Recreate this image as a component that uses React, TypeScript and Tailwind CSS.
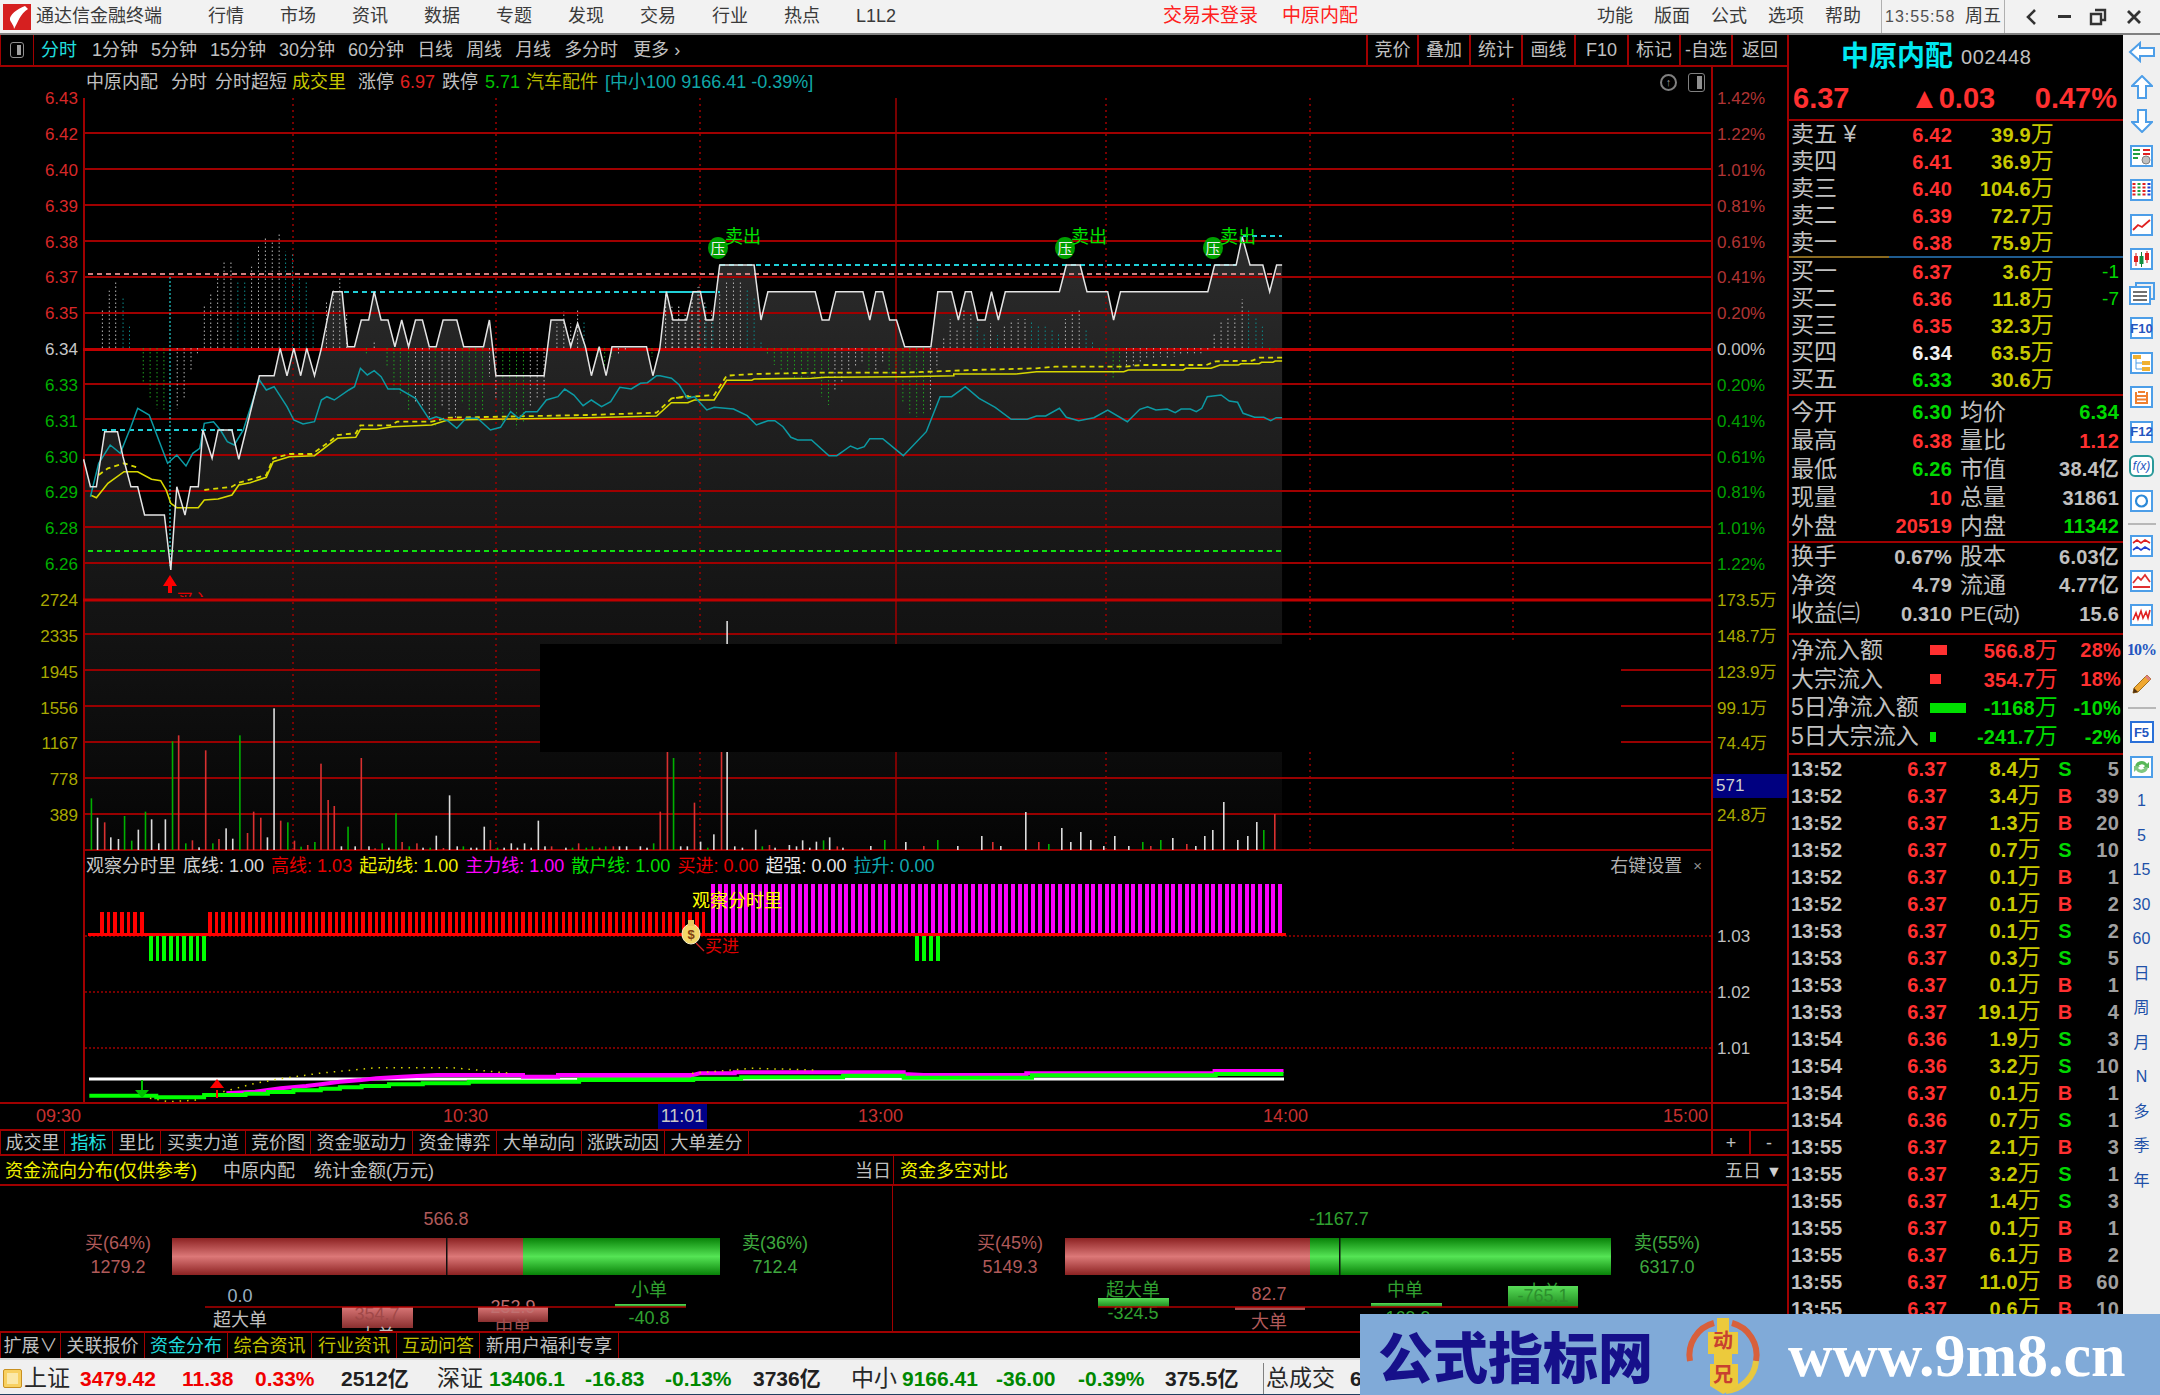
import React from "react";

type Pt = [number, number];
const z3 = (pts: Pt[]): Pt[] => pts.map(([x, y]) => [x / 2.178, 200 + y / 3]);
const z4 = (pts: Pt[]): Pt[] => pts.map(([x, y]) => [660 + x / 2.178, 200 + y / 3]);
const str = (pts: Pt[]) => pts.map(([x, y]) => `${x.toFixed(1)},${y.toFixed(1)}`).join(" ");

const price: Pt[] = [
  ...z3([[182,778],[197,860],[210,860],[228,695],[256,695],[268,770],[285,860],[300,860],[315,945],[358,945],[372,1110],[385,860],[403,945],[415,860],[432,860],[442,690],[462,775],[475,690],[505,690],[520,778],[565,527],[597,527],[610,445],[625,527],[640,445],[655,527],[668,445],[685,527],[700,445],[725,275],[745,275],[757,440],[772,440],[787,360],[803,360],[815,275],[830,360],[845,360],[860,440],[875,360],[890,440],[905,360],[920,360],[935,440],[950,440],[965,360],[995,360],[1010,440],[1053,440],[1066,360],[1080,527],[1185,527],[1200,360],[1228,360],[1243,440],[1258,370],[1275,440],[1288,527],[1305,440],[1320,527],[1333,440],[1408,440],[1422,527],[1437,445]]),
  ...z4([[14,275],[28,360],[58,360],[72,275],[88,275],[100,360],[115,360],[130,195],[205,195],[220,360],[235,275],[338,275],[353,360],[368,360],[383,275],[442,275],[457,360],[470,275],[485,275],[500,360],[515,360],[533,440],[590,440],[605,275],[635,275],[650,360],[665,275],[678,275],[692,360],[708,360],[722,275],[737,360],[752,275],[870,275],[885,195],[915,195],[930,275],[975,275],[988,360],[1003,275],[1193,275],[1208,195],[1255,195],[1268,110],[1285,195],[1313,195],[1328,275],[1343,195],[1355,195]]),
];

const teal: Pt[] = [
  ...z3([[197,890],[215,790],[240,735],[262,760],[285,680],[300,625],[325,645],[365,790],[385,765],[405,798],[420,760],[435,745],[445,670],[465,665],[480,690],[495,725],[510,735],[530,690],[565,540],[580,570],[597,560],[625,620],[640,660],[660,672],[685,665],[700,600],[712,590],[728,600],[760,570],[772,560],[785,505],[800,525],[815,512],[830,530],[845,567],[870,567],[905,595],[935,658],[950,650],[975,662],[995,685],[1015,655],[1040,655],[1068,690],[1090,682],[1112,635],[1130,655],[1145,635],[1170,635],[1190,600],[1215,590],[1230,567],[1250,585],[1270,617],[1288,600],[1310,620],[1330,605],[1350,562],[1375,567],[1395,550],[1410,548],[1430,527]]),
  ...z4([[0,527],[25,535],[42,555],[60,595],[75,590],[102,630],[118,622],[160,627],[190,647],[210,675],[235,662],[250,662],[268,680],[285,712],[300,720],[330,720],[368,767],[385,767],[415,738],[430,747],[445,740],[457,716],[485,716],[530,767],[580,695],[590,660],[610,590],[635,590],[665,560],[695,595],[730,622],[765,658],[800,658],[820,648],[840,648],[870,625],[885,652],[912,662],[945,653],[975,630],[1018,665],[1045,628],[1062,620],[1080,630],[1105,627],[1122,638],[1135,627],[1155,627],[1168,635],[1180,625],[1192,590],[1222,585],[1240,603],[1258,607],[1270,640],[1295,652],[1315,652],[1330,662],[1342,653],[1355,653]]),
];

const yellow: Pt[] = [
  ...z3([[197,885],[210,893],[235,850],[270,815],[300,815],[330,838],[350,842],[362,870],[372,910],[385,923],[432,923],[445,900],[475,897],[505,885],[520,855],[545,848],[580,832],[595,785],[630,770],[685,767],[720,730],[735,715],[775,712],[785,688],[820,688],[855,680],[940,675],[975,660],[1280,653],[1430,648],[1462,608],[1500,608]]),
  ...z4([[25,608],[60,608],[75,600],[118,600],[145,541],[200,541],[205,537],[330,535],[360,532],[530,530],[640,527],[640,522],[775,522],[820,515],[1010,515],[1020,510],[1140,510],[1145,505],[1200,505],[1220,495],[1260,495],[1265,491],[1305,491],[1310,487],[1335,487],[1340,483],[1355,483]]),
];

const yellowDash: Pt[] = [
  ...z3([[215,825],[235,805],[270,790],[300,803]]),
];
const yellowDash2: Pt[] = [
  ...z3([[445,870],[505,860],[520,848],[580,825],[595,775],[630,762],[680,762],[720,722],[735,705],[775,700],[785,676],[850,676],[865,665],[940,665],[975,653],[1280,645],[1430,638],[1462,596],[1500,588]]),
  ...z4([[25,595],[118,585],[145,527],[205,522],[340,518],[530,518],[680,510],[820,505],[860,500],[1010,500],[1050,495],[1190,495],[1210,484],[1290,482],[1305,473],[1355,473]]),
];

type Stick = [number, number, string];
const tickColor: Record<string, string> = { w: "#b4b4b4", t: "#0b8a8a", g: "#1fa01f" };
const sticks3: Stick[] = [[223,330,"w"],[238,272,"w"],[252,245,"w"],[268,290,"t"],[282,380,"t"],[312,545,"g"],[327,600,"g"],[342,625,"g"],[357,632,"g"],[386,625,"w"],[401,595,"w"],[416,515,"w"],[430,460,"w"],[445,312,"w"],[459,280,"w"],[474,225,"w"],[488,185,"w"],[503,182,"w"],[518,245,"t"],[533,245,"t"],[548,200,"w"],[563,140,"w"],[578,115,"w"],[593,120,"w"],[608,97,"w"],[622,155,"t"],[637,160,"t"],[652,235,"t"],[667,245,"t"],[682,325,"t"],[711,305,"w"],[726,270,"w"],[740,228,"w"],[755,340,"w"],[798,460,"g"],[815,420,"w"],[843,500,"g"],[858,570,"g"],[872,585,"g"],[890,635,"g"],[905,610,"w"],[920,635,"w"],[935,660,"w"],[948,680,"g"],[963,620,"w"],[978,640,"w"],[992,660,"w"],[1007,610,"g"],[1022,630,"g"],[1036,640,"g"],[1051,635,"g"],[1066,530,"w"],[1080,600,"w"],[1095,670,"g"],[1110,650,"g"],[1125,685,"g"],[1140,670,"g"],[1155,620,"w"],[1170,600,"w"],[1185,600,"w"],[1213,370,"w"],[1228,335,"w"],[1243,370,"w"],[1258,330,"w"],[1272,365,"t"],[1302,470,"g"],[1317,500,"g"],[1332,470,"g"],[1347,465,"w"],[1362,450,"w"],[1420,470,"g"],[1450,280,"w"],[1465,340,"w"],[1478,320,"w"],[1492,340,"w"],[1507,300,"w"],[1520,262,"w"],[1535,300,"w"],[1550,330,"w"]];
const sticks4: Stick[] = [[12,320,"w"],[26,320,"w"],[41,320,"w"],[56,345,"w"],[70,280,"w"],[85,260,"w"],[100,320,"t"],[115,360,"t"],[130,282,"w"],[145,245,"w"],[160,238,"w"],[175,245,"w"],[190,268,"t"],[205,290,"t"],[220,425,"t"],[234,465,"g"],[249,495,"g"],[264,510,"g"],[278,525,"g"],[293,540,"g"],[308,535,"g"],[322,530,"g"],[337,530,"g"],[352,590,"g"],[367,615,"g"],[381,575,"w"],[396,545,"w"],[411,520,"w"],[426,503,"w"],[440,490,"w"],[455,535,"g"],[470,510,"w"],[485,490,"w"],[499,525,"g"],[514,550,"g"],[529,610,"g"],[544,640,"g"],[559,650,"g"],[574,640,"g"],[589,630,"w"],[603,505,"w"],[618,410,"w"],[632,358,"w"],[647,385,"w"],[662,330,"w"],[677,340,"w"],[691,370,"t"],[706,400,"t"],[720,370,"w"],[735,405,"t"],[750,380,"w"],[765,362,"w"],[780,357,"w"],[795,357,"w"],[809,365,"t"],[824,373,"t"],[839,380,"t"],[854,390,"t"],[868,400,"t"],[883,357,"w"],[898,335,"w"],[913,325,"w"],[928,385,"t"],[942,425,"t"],[957,455,"g"],[972,475,"g"],[987,540,"g"],[1001,510,"g"],[1016,500,"w"],[1031,500,"w"],[1046,490,"w"],[1060,480,"w"],[1075,478,"w"],[1090,470,"w"],[1105,475,"w"],[1120,470,"w"],[1134,465,"w"],[1149,460,"w"],[1164,460,"w"],[1178,460,"w"],[1193,455,"w"],[1207,398,"w"],[1222,365,"w"],[1237,352,"w"],[1252,347,"w"],[1268,298,"w"],[1282,332,"t"],[1298,352,"t"],[1312,380,"t"],[1328,455,"g"],[1342,445,"g"],[1357,445,"g"]];

const volColor: Record<string, string> = { r: "#d83030", w: "#dcdcdc", g: "#00b000" };
const vols12: Stick[] = [[60,595,"g"],[72,653,"w"],[86,667,"r"],[98,712,"w"],[113,717,"w"],[125,648,"g"],[139,722,"g"],[152,689,"w"],[166,635,"g"],[178,658,"w"],[192,730,"w"],[205,658,"w"],[219,424,"g"],[231,406,"r"],[245,730,"g"],[258,721,"r"],[271,742,"w"],[284,451,"r"],[298,730,"g"],[310,717,"r"],[324,685,"w"],[337,716,"w"],[351,406,"g"],[366,699,"r"],[378,635,"r"],[392,653,"r"],[405,712,"w"],[418,325,"w"],[431,662,"r"],[445,667,"g"],[458,722,"r"],[471,740,"g"],[484,735,"r"],[498,726,"g"],[510,491,"r"],[524,600,"r"],[536,618,"r"],[550,739,"w"],[563,680,"g"],[577,739,"w"],[589,474,"r"],[604,739,"w"],[616,745,"r"],[630,730,"g"],[643,743,"w"],[657,640,"g"],[669,726,"r"],[683,739,"g"],[698,730,"r"],[710,743,"w"],[724,743,"g"],[736,707,"w"],[750,744,"r"],[762,586,"w"],[777,739,"w"],[789,739,"g"],[804,743,"w"],[815,743,"w"],[830,680,"w"],[842,720,"r"],[856,743,"g"],[869,743,"w"],[883,730,"w"],[895,743,"w"],[909,730,"w"],[922,743,"w"],[936,662,"w"],[949,739,"w"],[962,739,"r"],[990,743,"w"],[1003,743,"g"],[1015,730,"r"],[1030,743,"g"],[1042,739,"g"],[1056,743,"r"],[1068,739,"g"],[1083,739,"r"],[1095,739,"w"],[1109,739,"w"],[1136,739,"w"],[1149,743,"w"],[1162,730,"g"],[1175,635,"r"],[1189,455,"r"],[1201,474,"g"],[1215,739,"w"],[1228,739,"w"],[1242,608,"r"],[1254,725,"w"],[1268,743,"g"],[1280,703,"w"],[1295,455,"r"],[1306,63,"w"],[1321,739,"w"],[1336,743,"w"],[1362,689,"w"],[1375,739,"g"],[1389,735,"r"],[1400,743,"w"],[1428,735,"w"],[1442,739,"w"],[1454,721,"w"],[1468,743,"w"],[1481,725,"w"],[1495,721,"g"],[1507,712,"w"],[1522,739,"r"],[1533,743,"w"]];
const volsRest: Stick[] = [[870,4,"w"],[884,10,"g"],[905,8,"w"],[923,4,"r"],[937,10,"g"],[957,4,"w"],[981,14,"w"],[992,8,"r"],[1000,4,"w"],[1025,38,"w"],[1038,8,"r"],[1048,6,"g"],[1061,22,"w"],[1070,8,"w"],[1080,18,"w"],[1090,10,"w"],[1103,4,"w"],[1114,14,"w"],[1128,4,"w"],[1142,8,"g"],[1150,4,"r"],[1160,10,"g"],[1172,12,"w"],[1186,6,"r"],[1195,4,"w"],[1204,14,"w"],[1212,20,"w"],[1223,48,"w"],[1237,10,"w"],[1247,14,"w"],[1256,28,"w"],[1263,20,"g"],[1274,36,"r"]];

const priceLines = [97, 133, 169, 205, 241, 277, 313, 384, 419, 455, 491, 527, 563];
const volLines = [634, 670, 706, 742, 778, 814, 850];

function PriceChart() {
  const fill = `${str(price)} 1282,850 83,850`;
  return (
    <svg viewBox="83 98 1628 753" width={1628} height={753} className="block">
      <defs>
        <linearGradient id="areaFill" x1="0" y1="0" x2="0" y2="1">
          <stop offset="0" stopColor="#2c2c2c" />
          <stop offset="0.4" stopColor="#1b1b1b" />
          <stop offset="0.7" stopColor="#111111" />
          <stop offset="1" stopColor="#050505" />
        </linearGradient>
        <clipPath id="buyClip"><rect x="170" y="588" width="60" height="9" /></clipPath>
      </defs>
      <polygon points={fill} fill="url(#areaFill)" />
      {priceLines.map((y) => <line key={y} x1="83" x2="1711" y1={y} y2={y} stroke="#a00000" strokeWidth="2" />)}
      {volLines.map((y) => <line key={y} x1="83" x2="1711" y1={y} y2={y} stroke="#980000" strokeWidth="2" />)}
      {[293, 496, 700, 1106, 1310, 1513].map((x) => <line key={x} x1={x} x2={x} y1="98" y2="850" stroke="#a00000" strokeWidth="1.5" strokeDasharray="2 4" />)}
      <line x1="896" x2="896" y1="98" y2="850" stroke="#a00000" strokeWidth="1.5" />
      <line x1="84" x2="84" y1="98" y2="851" stroke="#a00000" strokeWidth="2" />
      <line x1="83" x2="1711" y1="349.5" y2="349.5" stroke="#c00000" strokeWidth="3" />
      <line x1="83" x2="1711" y1="600" y2="600" stroke="#c00000" strokeWidth="3" />

      {[...z3(sticks3.map(([x, y]) => [x, y] as Pt)).map((p, i) => [p[0], p[1], sticks3[i][2]] as Stick), ...z4(sticks4.map(([x, y]) => [x, y] as Pt)).map((p, i) => [p[0], p[1], sticks4[i][2]] as Stick)].map(([x, y, c], i) => (
        <line key={i} x1={x} x2={x} y1="348" y2={y} stroke={tickColor[c]} strokeWidth="1" strokeDasharray="1.5 2.5" />
      ))}

      <line x1="170" x2="170" y1="273" y2="566" stroke="#22d0d0" strokeWidth="1.2" strokeDasharray="2 2" />
      <line x1="88" x2="1282" y1="274" y2="274" stroke="#d08080" strokeWidth="2" strokeDasharray="5 4" />
      <line x1="88" x2="1282" y1="551" y2="551" stroke="#10e010" strokeWidth="2" strokeDasharray="5 4" />
      {[[102, 243, 430], [344, 715, 292], [664, 720, 292], [720, 1236, 265], [1243, 1282, 236]].map(([a, b, y], i) => (
        <line key={i} x1={a} x2={b} y1={y} y2={y} stroke="#20d0d8" strokeWidth="2" strokeDasharray="5 4" />
      ))}

      <polyline points={str(yellowDash)} fill="none" stroke="#d8d800" strokeWidth="1.8" strokeDasharray="5 4" />
      <polyline points={str(yellowDash2)} fill="none" stroke="#d8d800" strokeWidth="1.8" strokeDasharray="5 4" />
      <polyline points={str(yellow)} fill="none" stroke="#d8d800" strokeWidth="1.6" />
      <polyline points={str(teal)} fill="none" stroke="#0c9aa4" strokeWidth="1.5" />
      <polyline points={str(price)} fill="none" stroke="#e4e4e4" strokeWidth="1.5" />

      {[[718, 725], [1065, 1071], [1213, 1220]].map(([cx, tx]) => (
        <g key={cx}>
          <ellipse cx={cx} cy="248" rx="10" ry="11" fill="#00a000" />
          <text x={cx} y="254" textAnchor="middle" fontSize="15" fill="#f0f0f0">压</text>
          <text x={tx} y="243" fontSize="18" fill="#00e000">卖出</text>
        </g>
      ))}

      <path d="M170 575 L177 586 L172 586 L172 593 L168 593 L168 586 L163 586 Z" fill="#ff0000" />
      <text x="176" y="606" fontSize="17" fill="#e00000" clipPath="url(#buyClip)">买入</text>

      {[...vols12.map(([x, y, c]) => [60 + x / 1.96, 600 + y / 3, c] as Stick), ...volsRest.map(([x, h, c]) => [x, 850 - h, c] as Stick)].map(([x, y, c], i) => (
        <rect key={i} x={x} y={y} width="1.6" height={850 - y} fill={volColor[c]} />
      ))}

      <rect x="540" y="644" width="1081" height="108" fill="#000000" />
    </svg>
  );
}

function IndicatorChart() {
  const green: Pt[] = [[140,767],[245,767],[245,772],[320,772],[320,765],[385,765],[385,761],[420,761],[420,756],[460,756],[460,751],[503,751],[503,746],[533,746],[533,742],[567,742],[567,738],[610,738],[610,733],[663,733],[663,730],[735,730],[735,725],[908,725],[908,720],[1087,720],[1087,716],[1162,716],[1162,712],[1322,712],[1322,707],[1417,707],[1417,713],[1568,713]];
  const magenta: Pt[] = [[355,760],[400,755],[440,745],[480,738],[503,733],[533,725],[567,720],[590,715],[630,710],[685,705],[820,705],[820,710],[875,710],[875,705],[1087,705],[1097,700],[1152,700],[1152,697],[1417,697],[1417,702],[1448,705],[1568,705]];
  const conv = (p: Pt[]) => p.map(([x, y]) => [x / 1.568, 840 + y / 3] as Pt);
  const conv8 = (p: Pt[]) => p.map(([x, y]) => [900 + x / 1.742, 840 + y / 3] as Pt);
  const stepGreen = [...conv(green), ...conv8([[230,713],[230,706],[550,706],[550,702],[668,702]])];
  const stepMag = [...conv(magenta), ...conv8([[0,705],[220,705],[220,700],[548,700],[548,693],[668,693]])];
  const count = (a: number, b: number) => Array.from({ length: Math.floor((b - a) / 6.67) + 1 }, (_, i) => a + i * 6.67);
  return (
    <svg viewBox="85 881 1626 221" width={1626} height={221} className="block">
      {[936, 992, 1048].map((y) => <line key={y} x1="85" x2="1711" y1={y} y2={y} stroke="#a00000" strokeWidth="1.5" strokeDasharray="2 2" />)}
      {[...count(100, 142), ...count(208, 706)].map((x) => <rect key={x} x={x} y="912" width="3.6" height="23" fill="#ff0000" shapeRendering="crispEdges" />)}
      {count(711, 1283).map((x) => <rect key={x} x={x} y="884" width="4" height="51" fill="#ff00ff" shapeRendering="crispEdges" />)}
      {[...count(149, 204), 915, 922, 929, 936].filter((x) => x < 205 || x > 900).map((x) => <rect key={x} x={x} y="935" width="3.8" height="26" fill="#00ff00" shapeRendering="crispEdges" />)}
      <line x1="88" x2="1286" y1="934.5" y2="934.5" stroke="#ff0000" strokeWidth="3" />
      <line x1="89" x2="1284" y1="1079" y2="1079" stroke="#ffffff" strokeWidth="3" />
      <polyline points={str(stepMag)} fill="none" stroke="#ff00ff" strokeWidth="4" />
      <polyline points={str(stepGreen)} fill="none" stroke="#00ff00" strokeWidth="4" />
      <polyline points={str(conv([[350,755],[400,730],[440,716],[500,700],[590,683],[710,683],[800,700]]))} fill="none" stroke="#d8d800" strokeWidth="1.5" strokeDasharray="1.5 6" />
      <polyline points={str(conv([[1085,700],[1180,685],[1280,690]]))} fill="none" stroke="#d8d800" strokeWidth="1.5" strokeDasharray="1.5 6" />
      <polyline points={str(conv([[235,775],[265,785],[310,780]]))} fill="none" stroke="#d8d800" strokeWidth="1.5" strokeDasharray="1.5 6" />
      <line x1="142" x2="142" y1="1080" y2="1092" stroke="#00c000" strokeWidth="2" />
      <path d="M135 1090 L149 1090 L142 1098 Z" fill="#00c000" />
      <line x1="217" x2="217" y1="1090" y2="1098" stroke="#ff0000" strokeWidth="2" />
      <path d="M210 1088 L224 1088 L217 1079 Z" fill="#ff0000" />
      <text x="692" y="907" fontSize="18" fill="#ffff00">观察分时里</text>
      <ellipse cx="691" cy="934" rx="9" ry="10" fill="#f2d76a" stroke="#f8f0c8" />
      <rect x="688" y="920" width="6" height="6" fill="#e8c860" />
      <text x="691" y="939" textAnchor="middle" fontSize="13" fontWeight="700" fill="#804010">$</text>
      <line x1="696" x2="704" y1="943" y2="951" stroke="#d02020" strokeWidth="1.2" />
      <text x="705" y="952" fontSize="17" fill="#e00000">买进</text>
    </svg>
  );
}

function FlowChart(props: {
  box: string; id: string; total: string; totalColor: string; buyLabel: string; buy: string; sellLabel: string; sell: string;
  labelX: [number, number]; bar: [number, number, number, number]; base: [number, number]; children: React.ReactNode;
}) {
  const [a, mid, div, b] = props.bar;
  const cx = div;
  return (
    <svg viewBox={props.box} width={893} height={145} className="block">
      <defs>
        <linearGradient id={props.id + "r"} x1="0" y1="0" x2="0" y2="1">
          <stop offset="0" stopColor="#8c2222" /><stop offset="0.5" stopColor="#dc7878" /><stop offset="1" stopColor="#8c2222" />
        </linearGradient>
        <linearGradient id={props.id + "g"} x1="0" y1="0" x2="0" y2="1">
          <stop offset="0" stopColor="#088208" /><stop offset="0.5" stopColor="#55e455" /><stop offset="1" stopColor="#088208" />
        </linearGradient>
        <linearGradient id={props.id + "fr"} x1="0" y1="0" x2="0" y2="1">
          <stop offset="0" stopColor="#d87676" /><stop offset="1" stopColor="#8a3030" />
        </linearGradient>
        <linearGradient id={props.id + "fg"} x1="0" y1="0" x2="0" y2="1">
          <stop offset="0" stopColor="#58dc58" /><stop offset="1" stopColor="#1c881c" />
        </linearGradient>
      </defs>
      <text x={cx} y="1225" textAnchor="middle" fontSize="18" fill={props.totalColor}>{props.total}</text>
      <text x={props.labelX[0]} y="1249" textAnchor="middle" fontSize="18" fill="#b05a5a">{props.buyLabel}</text>
      <text x={props.labelX[0]} y="1273" textAnchor="middle" fontSize="18" fill="#b05a5a">{props.buy}</text>
      <text x={props.labelX[1]} y="1249" textAnchor="middle" fontSize="18" fill="#3fa83f">{props.sellLabel}</text>
      <text x={props.labelX[1]} y="1273" textAnchor="middle" fontSize="18" fill="#3fa83f">{props.sell}</text>
      <rect x={a} y="1238" width={mid - a} height="37" fill={`url(#${props.id}r)`} />
      <rect x={mid} y="1238" width={b - mid} height="37" fill={`url(#${props.id}g)`} />
      <rect x={div} y="1238" width="1.5" height="37" fill="#101010" />
      {props.children}
      <line x1={props.base[0]} x2={props.base[1]} y1="1307" y2="1307" stroke="#b00000" strokeWidth="1.6" />
    </svg>
  );
}

const t = "text-[#c0c0c0]";

function TitleBar() {
  const menu = ["行情", "市场", "资讯", "数据", "专题", "发现", "交易", "行业", "热点", "L1L2"];
  const menuRight = ["功能", "版面", "公式", "选项", "帮助"];
  return (
    <div className="flex h-[35px] shrink-0 items-center whitespace-nowrap border-b-2 border-[#808080] bg-[#f2f2f2] text-[18px] text-[#3a3a3a]">
      <svg viewBox="0 0 28 26" width={28} height={26} className="ml-[3px] shrink-0">
        <rect width="28" height="26" fill="#d62020" />
        <path d="M22 2 C14 5 6 11 7 16 C8 19 11 21 11 25 C15 18 17 10 25 5 Z" fill="#fff" />
      </svg>
      <span className="ml-[5px] w-[172px] shrink-0">通达信金融终端</span>
      <div className="flex w-[684px] shrink-0 gap-[36px]">{menu.map((m) => <span key={m} className="shrink-0">{m}</span>)}</div>
      <span className="ml-[271px] text-[19px] text-[#ff2020]">交易未登录</span>
      <span className="ml-[24px] text-[19px] text-[#ff2020]">中原内配</span>
      <div className="ml-[239px] flex gap-[21px]">{menuRight.map((m) => <span key={m}>{m}</span>)}</div>
      <div className="ml-[20px] flex h-full items-center border-x border-[#b0b0b0]">
        <span className="ml-[3px] w-[80px] text-[16px] tracking-[1px] text-[#505050]">13:55:58</span>
        <span className="mr-[3px] text-[18px]">周五</span>
      </div>
      <svg viewBox="0 0 16 20" width={16} height={20} className="ml-[19px]"><path d="M11 3 L4 10 L11 17" fill="none" stroke="#333" strokeWidth="2.6" /></svg>
      <span className="ml-[18px] h-[3px] w-[13px] bg-[#333]" />
      <svg viewBox="0 0 18 18" width={18} height={18} className="ml-[18px]"><path d="M6 2 H16 V12 H12 M2 6 H12 V16 H2 Z" fill="none" stroke="#333" strokeWidth="2.4" /></svg>
      <svg viewBox="0 0 18 18" width={18} height={18} className="ml-[18px]"><path d="M3 3 L15 15 M15 3 L3 15" stroke="#333" strokeWidth="2.8" /></svg>
    </div>
  );
}

function Toolbar() {
  const periods = ["1分钟", "5分钟", "15分钟", "30分钟", "60分钟", "日线", "周线", "月线", "多分时"];
  const right: [string, string][] = [["竞价", "w-[51px]"], ["叠加", "w-[52px]"], ["统计", "w-[52px]"], ["画线", "w-[53px]"], ["F10", "w-[53px]"], ["标记", "w-[52px]"], ["-自选", "w-[52px]"], ["返回", "w-[56px]"]];
  return (
    <div className={`flex h-[32px] shrink-0 items-center border-b-2 border-[#a00000] text-[18px] ${t}`}>
      <div className="flex h-full w-[34px] items-center justify-center border-x border-[#a00000]">
        <span className="flex h-[16px] w-[14px] justify-end rounded-[3px] border border-[#909090] p-[2px]"><span className="block w-[4px] bg-[#a0a0a0]" /></span>
      </div>
      <span className="ml-[7px] pt-[1px] text-[#20e0e0]">分时</span>
      <div className="ml-[15px] flex gap-[13px] pt-[1px]">{periods.map((p) => <span key={p}>{p}</span>)}</div>
      <span className="ml-[15px] pt-[1px]">更多 ›</span>
      <div className="ml-auto flex h-full">
        {right.map(([r, w]) => <span key={r} className={`flex items-center justify-center border-l-2 border-[#a00000] pt-[1px] ${w}`}>{r}</span>)}
      </div>
    </div>
  );
}

function LeftAxis() {
  const items: [string, string][] = [
    ["6.43", "#d82828"], ["6.42", "#d82828"], ["6.40", "#d82828"], ["6.39", "#d82828"], ["6.38", "#d82828"], ["6.37", "#d82828"], ["6.35", "#d82828"],
    ["6.34", "#c8c8c8"], ["6.33", "#00b000"], ["6.31", "#00b000"], ["6.30", "#00b000"], ["6.29", "#00b000"], ["6.28", "#00b000"], ["6.26", "#00b000"],
    ["2724", "#a8a800"], ["2335", "#a8a800"], ["1945", "#a8a800"], ["1556", "#a8a800"], ["1167", "#a8a800"], ["778", "#a8a800"], ["389", "#a8a800"],
  ];
  return (
    <div className="flex w-[83px] shrink-0 flex-col pt-[14px] pr-[5px] text-right text-[17px]">
      {items.map(([v, c]) => <span key={v} className="flex h-[35.85px] items-center justify-end" style={{ color: c }}>{v}</span>)}
    </div>
  );
}

function RightAxis() {
  const items: [string, string][] = [
    ["1.42%", "#b03434"], ["1.22%", "#b03434"], ["1.01%", "#b03434"], ["0.81%", "#b03434"], ["0.61%", "#b03434"], ["0.41%", "#b03434"], ["0.20%", "#b03434"],
    ["0.00%", "#c0c0c0"], ["0.20%", "#00a000"], ["0.41%", "#00a000"], ["0.61%", "#00a000"], ["0.81%", "#00a000"], ["1.01%", "#00a000"], ["1.22%", "#00a000"],
    ["173.5万", "#a8a800"], ["148.7万", "#a8a800"], ["123.9万", "#a8a800"], ["99.1万", "#a8a800"], ["74.4万", "#a8a800"],
  ];
  return (
    <div className="flex w-[76px] shrink-0 flex-col border-l-2 border-[#a00000] pt-[14px] text-[17px]">
      {items.map(([v, c], i) => <span key={i} className="flex h-[35.85px] items-center pl-[4px]" style={{ color: c }}>{v}</span>)}
      <span className="mt-[12px] flex h-[24px] items-center bg-[#000080] pl-[3px] text-[#d0d0d0]">571</span>
      <span className="flex h-[35.85px] items-center pl-[4px] text-[#a8a800]">24.8万</span>
    </div>
  );
}

function InfoRow() {
  return (
    <div className={`flex h-[31px] items-center pl-[3px] text-[18px] ${t}`}>
      <span>中原内配</span>
      <span className="ml-[13px]">分时</span>
      <span className="ml-[8px]">分时超短</span>
      <span className="ml-[5px] text-[#c8c800]">成交里</span>
      <span className="ml-[12px]">涨停</span>
      <span className="ml-[6px] text-[#e02020]">6.97</span>
      <span className="ml-[7px]">跌停</span>
      <span className="ml-[7px] text-[#00c000]">5.71</span>
      <span className="ml-[6px] text-[#b8b800]">汽车配件</span>
      <span className="ml-[7px] text-[#10a8a8]">[中小100 9166.41 -0.39%]</span>
      <div className="ml-auto mr-[6px] flex items-center gap-[11px]">
        <span className="flex size-[17px] items-center justify-center rounded-full border-2 border-[#808080] text-[11px] leading-none text-[#a0a0a0]">↑</span>
        <span className="flex h-[19px] w-[17px] justify-end rounded-[3px] border border-[#808080] p-[2px]"><span className="block w-[5px] bg-[#909090]" /></span>
      </div>
    </div>
  );
}

function IndicatorLabels() {
  const parts: [string, string, string][] = [
    ["底线:", "1.00", "#d8d8d8"], ["高线:", "1.03", "#e80000"], ["起动线:", "1.00", "#f0f000"], ["主力线:", "1.00", "#ff00ff"],
    ["散户线:", "1.00", "#00e000"], ["买进:", "0.00", "#e80000"], ["超强:", "0.00", "#e8e8e8"], ["拉升:", "0.00", "#10a8b0"],
  ];
  return (
    <div className="flex h-[30px] items-center pl-[1px] text-[18px] text-[#c8c8c8]">
      <span>观察分时里</span>
      <div className="ml-[7px] flex gap-[7px]">
        {parts.map(([a, b, c]) => <span key={a} style={{ color: c }}>{a} {b}</span>)}
      </div>
      <span className="ml-auto text-[18px] text-[#b0b0b0]">右键设置</span>
      <span className="ml-[11px] mr-[9px] text-[15px] text-[#909090]">×</span>
    </div>
  );
}

function TimeRow() {
  const c = "text-[#c83030]";
  return (
    <div className={`flex h-[27px] shrink-0 items-center border-t-2 border-[#a00000] text-[18px] ${c}`}>
      <span className="ml-[36px] w-[407px]">09:30</span>
      <span className="w-[215px]">10:30</span>
      <span className="flex h-full w-[49px] items-center justify-center bg-[#000088] text-[#c8c8c8]">11:01</span>
      <span className="ml-[151px] w-[405px]">13:00</span>
      <span className="w-[400px]">14:00</span>
      <span className="w-[48px]">15:00</span>
      <span className="h-full border-l-2 border-[#a00000]" />
    </div>
  );
}

function TabRow() {
  const tabs: [string, string][] = [["成交里", "w-[64px]"], ["指标", "w-[48px]"], ["里比", "w-[48px]"], ["买卖力道", "w-[85px]"], ["竞价图", "w-[65px]"], ["资金驱动力", "w-[102px]"], ["资金博弈", "w-[84px]"], ["大单动向", "w-[85px]"], ["涨跌动因", "w-[83px]"], ["大单差分", "w-[84px]"]];
  return (
    <div className={`flex h-[25px] shrink-0 border-t-2 border-[#a00000] text-[18px] leading-[25px] ${t}`}>
      <div className="flex border-l border-[#a00000]">
        {tabs.map(([n, w]) => <span key={n} className={`border-r border-[#a00000] text-center ${w} ${n === "指标" ? "text-[#20e0e0]" : ""}`}>{n}</span>)}
      </div>
      <div className="ml-auto flex">
        <span className="w-[38px] border-l-2 border-[#a00000] text-center">+</span>
        <span className="w-[38px] border-l-2 border-[#a00000] text-center">-</span>
      </div>
    </div>
  );
}

function FlowHeader() {
  return (
    <div className={`flex h-[32px] shrink-0 items-center border-y-2 border-[#a00000] pt-[3px] text-[18px] ${t}`}>
      <span className="ml-[5px] w-[218px] text-[#f0f000]">资金流向分布(仅供参考)</span>
      <span className="w-[91px]">中原内配</span>
      <span className="w-[541px]">统计金额(万元)</span>
      <span className="w-[38px]">当日</span>
      <span className="-mt-[3px] flex h-[31px] w-[832px] items-center border-l border-[#a00000] pt-[3px] pl-[6px] text-[#f0f000]">资金多空对比</span>
      <span>五日</span>
      <span className="ml-[5px] text-[16px] text-[#d0d0d0]">▼</span>
    </div>
  );
}

function FlowPanels() {
  const dim = { g: "#30a030", r: "#b05a5a", c: "#c0c0c0" };
  return (
    <div className="flex h-[145px] shrink-0">
      <div className="h-full w-[893px] border-r border-[#a00000]">
        <FlowChart box="0 1186 893 145" id="fa" total="566.8" totalColor={dim.r} buyLabel="买(64%)" buy="1279.2" sellLabel="卖(36%)" sell="712.4" labelX={[118, 775]} bar={[172, 523, 446, 720]} base={[205, 686]}>
          <text x="240" y="1302" textAnchor="middle" fontSize="18" fill="#9ab0c0">0.0</text>
          <text x="240" y="1326" textAnchor="middle" fontSize="18" fill={dim.c}>超大单</text>
          <rect x="342" y="1307" width="71" height="21" fill="url(#fafr)" />
          <text x="377" y="1320" textAnchor="middle" fontSize="18" fill="#a04848">354.7</text>
          <text x="377" y="1342" textAnchor="middle" fontSize="18" fill={dim.c}>大单</text>
          <rect x="478" y="1307" width="70" height="15" fill="url(#fafr)" />
          <text x="513" y="1313" textAnchor="middle" fontSize="18" fill="#c07070">252.9</text>
          <text x="513" y="1334" textAnchor="middle" fontSize="18" fill="#a05050">中单</text>
          <text x="649" y="1296" textAnchor="middle" fontSize="18" fill={dim.g}>小单</text>
          <rect x="615" y="1304" width="71" height="3" fill="url(#fafg)" />
          <text x="649" y="1324" textAnchor="middle" fontSize="18" fill={dim.g}>-40.8</text>
        </FlowChart>
      </div>
      <FlowChart box="894 1186 893 145" id="fb" total="-1167.7" totalColor={dim.g} buyLabel="买(45%)" buy="5149.3" sellLabel="卖(55%)" sell="6317.0" labelX={[1011, 1668]} bar={[1066, 1311, 1340, 1612]} base={[1099, 1579]}>
        <text x="1134" y="1296" textAnchor="middle" fontSize="18" fill={dim.g}>超大单</text>
        <rect x="1099" y="1298" width="71" height="9" fill="url(#fbfg)" />
        <text x="1134" y="1319" textAnchor="middle" fontSize="18" fill={dim.g}>-324.5</text>
        <text x="1270" y="1300" textAnchor="middle" fontSize="18" fill={dim.r}>82.7</text>
        <rect x="1236" y="1307" width="70" height="3" fill="#a05050" />
        <text x="1270" y="1328" textAnchor="middle" fontSize="18" fill={dim.r}>大单</text>
        <text x="1406" y="1296" textAnchor="middle" fontSize="18" fill={dim.g}>中单</text>
        <rect x="1372" y="1303" width="71" height="4" fill="url(#fbfg)" />
        <text x="1406" y="1324" textAnchor="middle" fontSize="18" fill={dim.g}>-169.9</text>
        <text x="1544" y="1298" textAnchor="middle" fontSize="18" fill={dim.g}>小单</text>
        <rect x="1509" y="1286" width="70" height="21" fill="url(#fbfg)" />
        <text x="1544" y="1302" textAnchor="middle" fontSize="18" fill="#2d8f2d">-765.1</text>
      </FlowChart>
    </div>
  );
}

function BottomTabs() {
  const tabs: [string, string, string][] = [["扩展∨", t, "w-[60px]"], ["关联报价", t, "w-[84px]"], ["资金分布", "text-[#20d8d8]", "w-[83px]"], ["综合资讯", "text-[#c0c000]", "w-[84px]"], ["行业资讯", "text-[#c0c000]", "w-[85px]"], ["互动问答", "text-[#c0c000]", "w-[83px]"], ["新用户福利专享", t, "w-[139px]"]];
  return (
    <div className="flex h-[27px] shrink-0 border-t-2 border-[#a00000] text-[18px] leading-[27px]">
      <div className="flex border-l border-[#a00000]">
        {tabs.map(([n, c, w]) => <span key={n} className={`border-r border-[#a00000] text-center ${c} ${w}`}>{n}</span>)}
      </div>
    </div>
  );
}

const Red = "text-[#ff3030]";
const Grn = "text-[#00d800]";
const Yel = "text-[#c8c800]";
const Gry = "text-[#c0c0c0]";
const Num = "text-right text-[20px] font-bold tracking-[0.2px]";

function Wan({ v, c }: { v: string; c: string }) {
  return <span className={`${Num} ${c} whitespace-nowrap`}>{v}<span className="text-[23px] font-normal">万</span></span>;
}

function Quote({ l, p, pc, v, x }: { l: string; p: string; pc: string; v: string; x?: string }) {
  return (
    <div className="grid h-[27px] grid-cols-[112px_49px_102px_65px] items-center">
      <span className={`text-[23px] ${Gry}`}>{l}</span>
      <span className={`${Num} ${pc}`}>{p}</span>
      <Wan v={v} c={Yel} />
      <span className={`text-right text-[19px] ${Grn}`}>{x}</span>
    </div>
  );
}

function Stat({ a, b, bc, c, d, dc }: { a: string; b: string; bc: string; c: React.ReactNode; d: string; dc: string }) {
  return (
    <div className="grid h-[28.5px] grid-cols-[112px_49px_8px_60px_99px] items-center whitespace-nowrap">
      <span className={`text-[23px] ${Gry}`}>{a}</span>
      <span className={`${Num} ${bc} justify-self-end`}>{b}</span>
      <span />
      <span className={`text-[23px] ${Gry}`}>{c}</span>
      <span className={`${Num} ${dc}`}>{d}</span>
    </div>
  );
}

function FlowRow({ a, w, v, p, c, bar }: { a: string; w: number; v: string; p: string; c: string; bar: string }) {
  return (
    <div className="grid h-[28.8px] grid-cols-[139px_40px_88px_63px] items-center whitespace-nowrap">
      <span className={`text-[23px] ${Gry}`}>{a}</span>
      <span className={`h-[10px] ${bar}`} style={{ width: w }} />
      <Wan v={v} c={c} />
      <span className={`${Num} ${c}`}>{p}</span>
    </div>
  );
}

const ticks: [string, string, string, string, string][] = [
  ["13:52","6.37","8.4","S","5"],["13:52","6.37","3.4","B","39"],["13:52","6.37","1.3","B","20"],["13:52","6.37","0.7","S","10"],["13:52","6.37","0.1","B","1"],["13:52","6.37","0.1","B","2"],["13:53","6.37","0.1","S","2"],
  ["13:53","6.37","0.3","S","5"],["13:53","6.37","0.1","B","1"],["13:53","6.37","19.1","B","4"],["13:54","6.36","1.9","S","3"],["13:54","6.36","3.2","S","10"],["13:54","6.37","0.1","B","1"],["13:54","6.36","0.7","S","1"],
  ["13:55","6.37","2.1","B","3"],["13:55","6.37","3.2","S","1"],["13:55","6.37","1.4","S","3"],["13:55","6.37","0.1","B","1"],["13:55","6.37","6.1","B","2"],["13:55","6.37","11.0","B","60"],["13:55","6.37","0.6","B","10"],
];

function RightPanel() {
  const line = "border-t-2 border-[#a00000]";
  return (
    <div className="flex w-[336px] shrink-0 flex-col overflow-hidden border-l-2 border-[#a00000] leading-none">
      <div className="flex h-[42px] items-center pl-[52px] pt-[2px]">
        <span className="text-[28px] font-bold text-[#00e8f0]">中原内配</span>
        <span className="ml-[8px] text-[20px] tracking-[0.6px] text-[#c0c0c0]">002448</span>
      </div>
      <div className={`flex h-[42px] items-center text-[29px] font-bold ${Red}`}>
        <span className="ml-[4px] w-[117px]">6.37</span>
        <span className="w-[123px]">▲0.03</span>
        <span className="w-[84px] text-right">0.47%</span>
      </div>
      <div className={`${line} pl-[2px]`}>
        <Quote l="卖五 ¥" p="6.42" pc={Red} v="39.9" />
        <Quote l="卖四" p="6.41" pc={Red} v="36.9" />
        <Quote l="卖三" p="6.40" pc={Red} v="104.6" />
        <Quote l="卖二" p="6.39" pc={Red} v="72.7" />
        <Quote l="卖一" p="6.38" pc={Red} v="75.9" />
      </div>
      <div className="flex h-[2px] shrink-0"><span className="w-[100px] bg-[#8a6a20]" /><span className="flex-1 bg-[#1f5c90]" /></div>
      <div className="pl-[2px]">
        <Quote l="买一" p="6.37" pc={Red} v="3.6" x="-1" />
        <Quote l="买二" p="6.36" pc={Red} v="11.8" x="-7" />
        <Quote l="买三" p="6.35" pc={Red} v="32.3" />
        <Quote l="买四" p="6.34" pc="text-[#f0f0f0]" v="63.5" />
        <Quote l="买五" p="6.33" pc={Grn} v="30.6" />
      </div>
      <div className={`${line} mt-[1px] pt-[2px] pl-[2px]`}>
        <Stat a="今开" b="6.30" bc={Grn} c="均价" d="6.34" dc={Grn} />
        <Stat a="最高" b="6.38" bc={Red} c="量比" d="1.12" dc={Red} />
        <Stat a="最低" b="6.26" bc={Grn} c="市值" d="38.4亿" dc={Gry} />
        <Stat a="现量" b="10" bc={Red} c="总量" d="31861" dc={Gry} />
        <Stat a="外盘" b="20519" bc={Red} c="内盘" d="11342" dc={Grn} />
      </div>
      <div className={`${line} pl-[2px] pb-[5px]`}>
        <Stat a="换手" b="0.67%" bc={Gry} c="股本" d="6.03亿" dc={Gry} />
        <Stat a="净资" b="4.79" bc={Gry} c="流通" d="4.77亿" dc={Gry} />
        <Stat a="收益㈢" b="0.310" bc={Gry} c={<span className="text-[20px]">PE(动)</span>} d="15.6" dc={Gry} />
      </div>
      <div className={`${line} pl-[2px] pt-[1px] pb-[2px]`}>
        <FlowRow a="净流入额" w={17} v="566.8" p="28%" c={Red} bar="bg-[#ff3030]" />
        <FlowRow a="大宗流入" w={11} v="354.7" p="18%" c={Red} bar="bg-[#ff3030]" />
        <FlowRow a="5日净流入额" w={36} v="-1168" p="-10%" c={Grn} bar="bg-[#00e000]" />
        <FlowRow a="5日大宗流入" w={6} v="-241.7" p="-2%" c={Grn} bar="bg-[#00e000]" />
      </div>
      <div className={`${line} pl-[2px]`}>
        {ticks.map(([tm, p, v, s, n], i) => (
          <div key={i} className="grid h-[27px] grid-cols-[96px_60px_94px_48px_30px] items-center">
            <span className={`text-[20px] font-bold ${Gry}`}>{tm}</span>
            <span className={`${Num} ${Red}`}>{p}</span>
            <Wan v={v} c={Yel} />
            <span className={`text-center text-[20px] font-bold ${s === "S" ? Grn : Red}`}>{s}</span>
            <span className={`${Num} text-[#a0a0a0]`}>{n}</span>
          </div>
        ))}
      </div>
    </div>
  );
}

function IconBox({ children }: { children: React.ReactNode }) {
  return <span className="flex h-[22px] w-[23px] items-center justify-center border-2 border-[#4d9ee8] bg-white text-[13px] font-bold leading-none text-[#2456c0]">{children}</span>;
}

function Sidebar() {
  const row = "flex h-[34.5px] shrink-0 items-center justify-center";
  const Sep = ({ h }: { h: string }) => <div className={`flex shrink-0 items-center justify-center ${h}`}><span className="h-[2px] w-[28px] bg-[#b8b8b8]" /></div>;
  return (
    <div className="flex w-[37px] shrink-0 flex-col overflow-hidden bg-[#f0f0f0]">
      <div className={row}><svg viewBox="0 0 28 22" width={28} height={22}><path d="M2 11 L12 2 V7 H26 V15 H12 V20 Z" fill="#fff" stroke="#4d9ee8" strokeWidth="2" /></svg></div>
      <div className={row}><svg viewBox="0 0 22 24" width={22} height={24}><path d="M11 1 L21 11 H15 V23 H7 V11 H1 Z" fill="#fff" stroke="#4d9ee8" strokeWidth="2" /></svg></div>
      <div className={row}><svg viewBox="0 0 22 24" width={22} height={24}><path d="M11 23 L21 13 H15 V1 H7 V13 H1 Z" fill="#fff" stroke="#4d9ee8" strokeWidth="2" /></svg></div>
      <div className={row}><IconBox><svg viewBox="0 0 19 18" width={19} height={18}><path d="M1 3 H8 M1 7 H8 M1 11 H6" stroke="#20a040" strokeWidth="2" /><path d="M11 3 H18 M11 7 H18" stroke="#e02020" strokeWidth="2" /><circle cx="14" cy="13" r="4" fill="#c0c0c0" stroke="#808080" /></svg></IconBox></div>
      <div className={row}><IconBox><svg viewBox="0 0 19 18" width={19} height={18}><path d="M2 2 V16" stroke="#e02020" strokeWidth="3" strokeDasharray="2 1.5" /><path d="M7 2 V16" stroke="#20a040" strokeWidth="3" strokeDasharray="2 1.5" /><path d="M12 2 V16" stroke="#e02020" strokeWidth="3" strokeDasharray="2 1.5" /><path d="M17 2 V16" stroke="#2040d0" strokeWidth="3" strokeDasharray="2 1.5" /></svg></IconBox></div>
      <div className={row}><IconBox><svg viewBox="0 0 19 18" width={19} height={18}><path d="M1 14 L6 9 L10 11 L18 4" fill="none" stroke="#e02020" strokeWidth="1.8" /></svg></IconBox></div>
      <div className={row}><IconBox><svg viewBox="0 0 19 18" width={19} height={18}><path d="M4 3 V16 M15 1 V13" stroke="#d02020" strokeWidth="1" /><rect x="2" y="6" width="4" height="6" fill="#e02020" /><rect x="13" y="3" width="4" height="7" fill="#e02020" /><path d="M9.5 2 V17" stroke="#108030" /><rect x="7.5" y="6" width="4" height="8" fill="#109040" /></svg></IconBox></div>
      <div className={row}><svg viewBox="0 0 26 24" width={26} height={24}><path d="M7 5 V1 H25 V17 H21" fill="none" stroke="#4d9ee8" strokeWidth="2" /><rect x="1" y="5" width="20" height="17" fill="#fff" stroke="#4d9ee8" strokeWidth="2" /><path d="M4 10 H18 M4 14 H18 M4 18 H18" stroke="#707070" strokeWidth="2" /></svg></div>
      <div className={row}><IconBox>F10</IconBox></div>
      <div className={row}><IconBox><svg viewBox="0 0 19 18" width={19} height={18}><rect x="1" y="1" width="8" height="4" fill="#f0b030" /><rect x="10" y="7" width="8" height="4" fill="#f0b030" /><rect x="10" y="13" width="8" height="4" fill="#f0b030" /><path d="M4 5 V15 H10 M4 9 H10" fill="none" stroke="#4d9ee8" /></svg></IconBox></div>
      <div className={row}><IconBox><svg viewBox="0 0 19 18" width={19} height={18}><path d="M6 4 H13 M4 4 V15 H15 V4 M4 8 H15 M4 11.5 H15" fill="none" stroke="#f08030" strokeWidth="2" /></svg></IconBox></div>
      <div className={row}><IconBox>F12</IconBox></div>
      <div className={row}><span className="flex h-[22px] w-[25px] items-center justify-center rounded-[6px] border-2 border-[#2a9a9a] bg-white text-[12px] italic leading-none text-[#2456c0]">f(x)</span></div>
      <div className={row}><IconBox><svg viewBox="0 0 19 18" width={19} height={18}><circle cx="9.5" cy="9" r="5.5" fill="none" stroke="#2c8ad8" strokeWidth="2.2" /></svg></IconBox></div>
      <Sep h="h-[11px]" />
      <div className={row}><IconBox><svg viewBox="0 0 19 18" width={19} height={18}><path d="M1 6 L5 3 L9 6 L13 3 L18 6" fill="none" stroke="#e02020" strokeWidth="1.6" /><path d="M1 13 L5 10 L9 13 L13 10 L18 13" fill="none" stroke="#2040d0" strokeWidth="1.6" /></svg></IconBox></div>
      <div className={row}><IconBox><svg viewBox="0 0 19 18" width={19} height={18}><path d="M1 11 L6 5 L9 8 L13 3 L18 10 M1 15 H18" fill="none" stroke="#e03030" strokeWidth="1.8" /></svg></IconBox></div>
      <div className={row}><IconBox><svg viewBox="0 0 19 18" width={19} height={18}><path d="M1 14 L4 7 L6 13 L9 5 L11 12 L14 6 L16 12 L18 4" fill="none" stroke="#e02020" strokeWidth="1.6" /></svg></IconBox></div>
      <div className={`${row} text-[16px] font-bold tracking-[-1px] text-[#2456c0] [font-family:'Liberation_Serif',serif]`}>10%</div>
      <div className={row}><svg viewBox="0 0 24 24" width={24} height={24}><path d="M17 3 L21 7 L8 20 L3 21 L4 16 Z" fill="#f0a830" stroke="#a07020" /><path d="M17 3 L21 7 L19 9 L15 5 Z" fill="#e08080" /><path d="M4 16 L8 20 L3 21 Z" fill="#503010" /></svg></div>
      <Sep h="h-[13.5px]" />
      <div className={row}><span className="flex h-[22px] w-[24px] items-center justify-center border-2 border-[#2a70d8] bg-white text-[13px] font-bold text-[#2456c0]">F5</span></div>
      <div className={row}><IconBox><svg viewBox="0 0 19 18" width={19} height={18}><path d="M3 9 A6.5 6.5 0 0 1 15 6 L17 4 V10 H11 L13 8 A4 4 0 0 0 6 9 Z" fill="#58b858" /><path d="M16 9 A6.5 6.5 0 0 1 4 12 L2 14 V8 H8 L6 10 A4 4 0 0 0 13 9 Z" fill="#80c880" /></svg></IconBox></div>
      {["1", "5", "15", "30", "60", "日", "周", "月", "N", "多", "季", "年"].map((s) => (
        <div key={s} className={`${row} text-[16px] text-[#2050a8]`}>{s}</div>
      ))}
    </div>
  );
}

function StatusBar() {
  const items: [string, string, number][] = [
    ["上证", "L", 56], ["3479.42", "R", 102], ["11.38", "R", 73], ["0.33%", "R", 86], ["2512亿", "K", 96],
    ["深证", "L", 52], ["13406.1", "G", 96], ["-16.83", "G", 80], ["-0.13%", "G", 88], ["3736亿", "K", 98],
    ["中小", "L", 51], ["9166.41", "G", 94], ["-36.00", "G", 82], ["-0.39%", "G", 87], ["375.5亿", "K", 98],
  ];
  const color: Record<string, string> = {
    L: "text-[23px] font-normal text-[#282828]", R: "text-[#f00000]", G: "text-[#008800]", K: "text-[#202020]",
  };
  return (
    <div className="flex h-[37px] shrink-0 items-center whitespace-nowrap border-t-2 border-b border-[#d8d8d8] border-b-[#204060] bg-[#f0f0f0] pt-[3px] text-[21px] font-bold">
      <span className="ml-[3px] mr-[2px] flex size-[19px] items-center justify-center rounded-[2px] border border-[#c89020] bg-[#f8d060]"><span className="size-[11px] bg-[#fbe8a8]" /></span>
      {items.map(([s, k, w], i) => (
        <span key={i} className={color[k]} style={{ width: w }}>{s}</span>
      ))}
      <span className="h-full border-l border-[#808080]" />
      <span className="ml-[2px] w-[84px] text-[23px] font-normal text-[#282828]">总成交</span>
      <span className="text-[#202020]">6245亿</span>
    </div>
  );
}

function Watermark() {
  return (
    <div className="absolute right-0 bottom-0 flex h-[81px] w-[800px] items-center bg-[#80aad8]">
      <span className="ml-[18px] text-[55px] font-black leading-none text-[#16108a] [font-family:'Noto_Sans_CJK_SC',sans-serif]">公式指标网</span>
      <svg viewBox="0 0 78 78" width={78} height={78} className="ml-[31px]">
        <path d="M6 45 A33 33 0 0 1 30 7" fill="none" stroke="#d8603c" strokeWidth="6" />
        <path d="M48 7 A33 33 0 0 1 72 45" fill="none" stroke="#d8603c" strokeWidth="6" />
        <path d="M72 45 A33 33 0 0 1 42 75" fill="none" stroke="#e8c840" strokeWidth="6" />
        <path d="M33 2 H45 V16 H54 V38 H48 V48 H54 V70 L39 78 L26 70 V48 H30 V38 H24 V16 H33 Z" fill="#ecca3c" />
        <text x="39" y="32" textAnchor="middle" fontSize="20" fontWeight="700" fill="#c84030">动</text>
        <text x="39" y="66" textAnchor="middle" fontSize="20" fontWeight="700" fill="#c84030">兄</text>
      </svg>
      <span className="ml-[26px] text-[62px] font-bold leading-none text-white [font-family:'Liberation_Serif',serif]">www.9m8.cn</span>
    </div>
  );
}

export default function App() {
  return (
    <div className="relative flex h-[1395px] w-[2160px] flex-col overflow-hidden bg-black [font-family:'Liberation_Sans','Noto_Sans_CJK_SC',sans-serif]">
      <TitleBar />
      <div className="flex h-[1323px] shrink-0">
        <div className="flex w-[1787px] shrink-0 flex-col">
          <Toolbar />
          <div className="flex h-[784px] shrink-0">
            <LeftAxis />
            <div className="flex w-[1628px] shrink-0 flex-col">
              <InfoRow />
              <PriceChart />
            </div>
            <RightAxis />
          </div>
          <div className="flex h-[251px] shrink-0">
            <div className="w-[83px] shrink-0" />
            <div className="flex w-[1628px] shrink-0 flex-col border-l-2 border-[#a00000]">
              <IndicatorLabels />
              <IndicatorChart />
            </div>
            <div className={`flex w-[76px] shrink-0 flex-col border-l-2 border-[#a00000] pt-[58px] text-[17px] ${t}`}>
              {["1.03", "1.02", "1.01"].map((v) => <span key={v} className="flex h-[56px] items-center pl-[4px]">{v}</span>)}
            </div>
          </div>
          <TimeRow />
          <TabRow />
          <FlowHeader />
          <FlowPanels />
          <BottomTabs />
        </div>
        <RightPanel />
        <Sidebar />
      </div>
      <StatusBar />
      <Watermark />
    </div>
  );
}
